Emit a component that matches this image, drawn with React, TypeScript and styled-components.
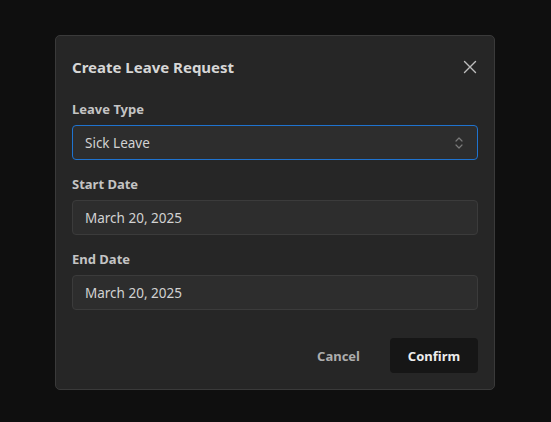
import styled, { createGlobalStyle } from "styled-components";

const GlobalStyle = createGlobalStyle`
  html, body {
    margin: 0;
    padding: 0;
    background: #0f0f0f;
    font-family: "Noto Sans", "Open Sans", sans-serif;
  }
`;

const fields = [
  { label: "Start Date", value: "March 20, 2025" },
  { label: "End Date", value: "March 20, 2025" },
];

function App() {
  return (
    <>
      <GlobalStyle />
      <Page>
        <Dialog>
          <Header>
            <Title>Create Leave Request</Title>
            <CloseBtn aria-label="Close">
              <svg width="16" height="16" viewBox="0 0 16 16" fill="none">
                <path
                  d="M2.5 2.5l11 11M13.5 2.5l-11 11"
                  stroke="#bdbdbd"
                  strokeWidth="1.4"
                  strokeLinecap="round"
                />
              </svg>
            </CloseBtn>
          </Header>
          <Field>
            <Label>Leave Type</Label>
            <Control focused>
              <span>Sick Leave</span>
              <svg width="10" height="14" viewBox="0 0 10 14" fill="none">
                <path
                  d="M2 5l3-3 3 3M2 9l3 3 3-3"
                  stroke="#7a7a7a"
                  strokeWidth="1.2"
                  strokeLinecap="round"
                  strokeLinejoin="round"
                />
              </svg>
            </Control>
          </Field>
          {fields.map((f) => (
            <Field key={f.label}>
              <Label>{f.label}</Label>
              <Control>
                <span>{f.value}</span>
              </Control>
            </Field>
          ))}
          <Footer>
            <GhostBtn>Cancel</GhostBtn>
            <PrimaryBtn>Confirm</PrimaryBtn>
          </Footer>
        </Dialog>
      </Page>
    </>
  );
}

export default App;

const Page = styled.div`
  height: 422px;
  display: flex;
  justify-content: flex-start;
  align-items: flex-start;
  padding: 35px 0 0 55px;
  box-sizing: border-box;
`;

const Dialog = styled.div`
  width: 440px;
  box-sizing: border-box;
  background: #262626;
  border: 1px solid #3a3a3a;
  border-radius: 5px;
  padding: 16px;
  display: flex;
  flex-direction: column;
  gap: 14px;
`;

const Header = styled.div`
  display: flex;
  align-items: center;
  justify-content: space-between;
  height: 30px;
  margin-bottom: 3px;
`;

const Title = styled.h2`
  margin: 0;
  font-size: 15px;
  font-weight: 700;
  color: #d6d6d6;
`;

const CloseBtn = styled.button`
  border: none;
  background: transparent;
  padding: 0;
  width: 30px;
  height: 30px;
  margin-right: -7px;
  display: flex;
  align-items: center;
  justify-content: center;
  cursor: pointer;
`;

const Field = styled.div`
  display: flex;
  flex-direction: column;
  gap: 6px;
`;

const Label = styled.label`
  font-size: 13px;
  line-height: 20px;
  font-weight: 700;
  color: #c4c4c4;
`;

const Control = styled.div<{ focused?: boolean }>`
  height: 35px;
  box-sizing: border-box;
  display: flex;
  align-items: center;
  justify-content: space-between;
  padding: 0 13px 0 12px;
  background: #2d2d2d;
  border: 1px solid ${(p) => (p.focused ? "#1f73cf" : "#3b3b3b")};
  border-radius: 4px;
  font-size: 13.5px;
  color: #d2d2d2;
`;

const Footer = styled.div`
  display: flex;
  justify-content: flex-end;
  gap: 14px;
  margin-top: 14px;
`;

const GhostBtn = styled.button`
  height: 35px;
  padding: 0 16px;
  border: none;
  background: transparent;
  border-radius: 4px;
  font-family: inherit;
  font-size: 13px;
  font-weight: 700;
  color: #adadad;
  cursor: pointer;
`;

const PrimaryBtn = styled.button`
  height: 35px;
  width: 88px;
  border: none;
  background: #161616;
  border-radius: 4px;
  font-family: inherit;
  font-size: 13px;
  font-weight: 700;
  color: #ececec;
  cursor: pointer;
`;
